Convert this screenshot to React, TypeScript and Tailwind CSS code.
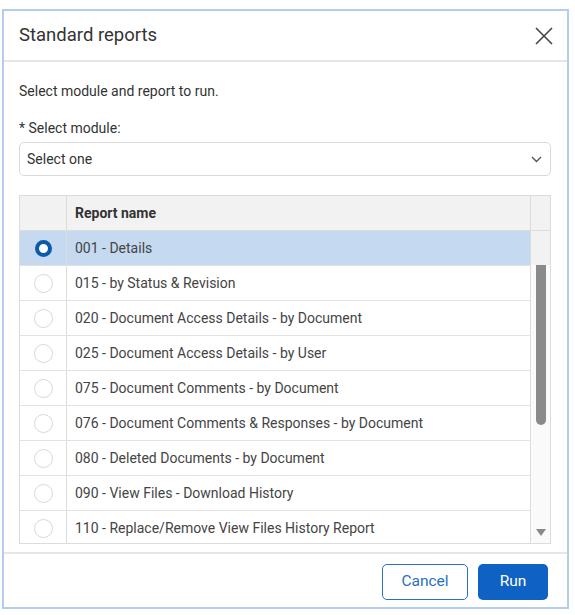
import { useState } from "react";

const REPORTS = [
  "001 - Details",
  "015 - by Status & Revision",
  "020 - Document Access Details - by Document",
  "025 - Document Access Details - by User",
  "075 - Document Comments - by Document",
  "076 - Document Comments & Responses - by Document",
  "080 - Deleted Documents - by Document",
  "090 - View Files - Download History",
  "110 - Replace/Remove View Files History Report",
];

function Radio({ checked }: { checked: boolean }) {
  return checked ? (
    <span className="block h-[17px] w-[17px] rounded-full border-[4px] border-[#0b5aab] bg-white" />
  ) : (
    <span className="block h-[19px] w-[19px] rounded-full border border-[#d9d9d9] bg-white" />
  );
}

export default function App() {
  const [selected, setSelected] = useState(0);

  return (
    <div className="h-[615px] w-[575px] bg-white pl-[2px] pt-[9px] font-['Roboto','Liberation_Sans',sans-serif]">
      <div className="flex h-[600px] w-[567px] flex-col border-2 border-[#b3cdec] bg-white">
        {/* header */}
        <div className="flex h-[51px] shrink-0 items-center justify-between border-b-2 border-[#e6e6e6] pl-[15px] pr-[11px]">
          <h2 className="text-[18.5px] text-[#333]">Standard reports</h2>
          <button className="flex h-6 w-6 items-center justify-center text-[#444]">
            <svg width="20" height="20" viewBox="0 0 20 20" fill="none" stroke="currentColor" strokeWidth="1.6">
              <path d="M2 2 L18 18 M18 2 L2 18" />
            </svg>
          </button>
        </div>

        {/* body */}
        <div className="flex flex-1 flex-col pl-[15px] pr-[16px] pt-[21px]">
          <p className="text-[14px] leading-[16px] text-[#333]">Select module and report to run.</p>
          <label className="mt-[21px] text-[14px] leading-[16px] text-[#333]">* Select module:</label>
          <div className="mt-[6px] flex h-[34px] items-center justify-between rounded-[5px] border border-[#d9d9d9] pl-[7px] pr-[8px]">
            <span className="text-[14px] text-[#333]">Select one</span>
            <svg width="11" height="7" viewBox="0 0 11 7" fill="none" stroke="#555" strokeWidth="1.4">
              <path d="M1 1 L5.5 5.5 L10 1" />
            </svg>
          </div>

          {/* table */}
          <div className="mt-[19px] flex h-[349px] border border-[#dcdcdc]">
            <div className="flex flex-1 flex-col overflow-hidden">
              <div className="flex h-[35px] shrink-0 border-b border-[#dcdcdc] bg-[#f2f2f2]">
                <div className="w-[47px] shrink-0 border-r border-[#dcdcdc]" />
                <div className="flex items-center pl-[8px] text-[14px] font-bold text-[#333]">Report name</div>
              </div>
              {REPORTS.map((r, i) => (
                <div
                  key={r}
                  onClick={() => setSelected(i)}
                  className={
                    "flex h-[35px] shrink-0 cursor-pointer border-b border-[#e2e2e2] last:border-b-0 " +
                    (i === selected ? "bg-[#c5daf1]" : "bg-white")
                  }
                >
                  <div className="flex w-[47px] shrink-0 items-center justify-center border-r border-[#dcdcdc]">
                    <Radio checked={i === selected} />
                  </div>
                  <div className="flex items-center pl-[8px] text-[14px] text-[#444]">{r}</div>
                </div>
              ))}
            </div>

            {/* scrollbar column */}
            <div className="flex w-[20px] shrink-0 flex-col border-l border-[#dcdcdc]">
              <div className="h-[35px] shrink-0 border-b border-[#dcdcdc] bg-[#f2f2f2]" />
              <div className="h-[34px] shrink-0 bg-[#f2f2f2]" />
              <div className="flex flex-1 flex-col items-center bg-[#fafafa]">
                <div className="h-[160px] w-[10px] rounded-b-[5px] bg-[#8a8a8a]" />
                <div className="flex-1" />
                <svg width="10" height="7" viewBox="0 0 10 7" className="mb-[7px]">
                  <path d="M0 0 L10 0 L5 7 Z" fill="#888" />
                </svg>
              </div>
            </div>
          </div>
        </div>

        {/* footer */}
        <div className="flex h-[55px] shrink-0 items-start justify-end gap-[10px] border-t-2 border-[#e6e6e6] pr-[19px] pt-[10px]">
          <button className="h-[36px] w-[86px] rounded-[5px] border border-[#2a6fc0] bg-white text-[15.5px] text-[#2a6fc0]">
            Cancel
          </button>
          <button className="h-[36px] w-[70px] rounded-[5px] bg-[#0f62c3] text-[15.5px] text-white">Run</button>
        </div>
      </div>
    </div>
  );
}
